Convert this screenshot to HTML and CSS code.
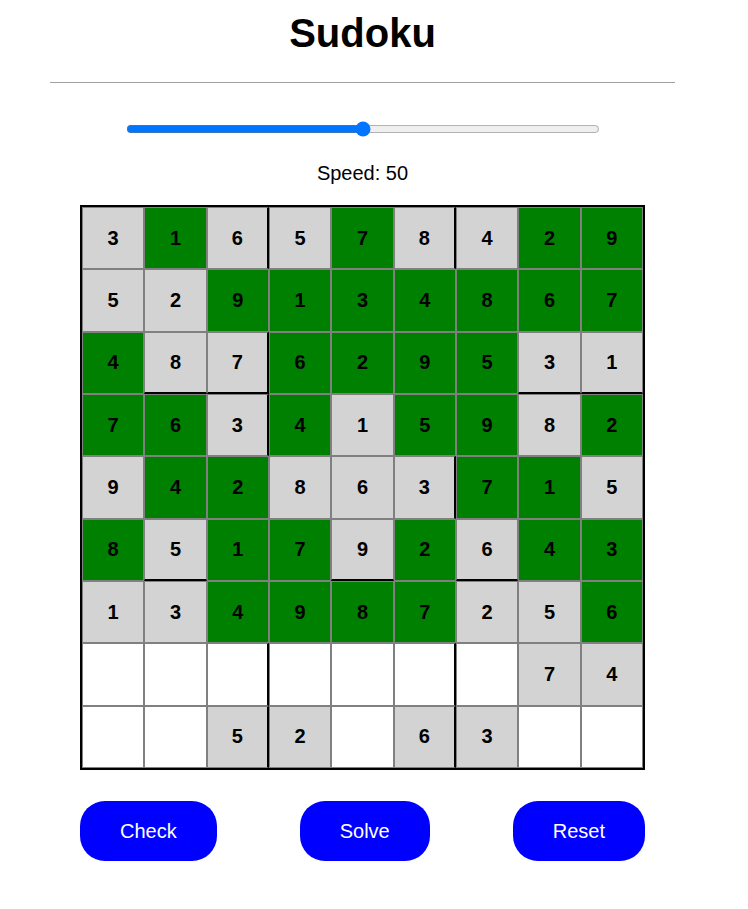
FILE: index.html
```html
<!DOCTYPE html>
<html lang="en">
<head>
<meta charset="utf-8">
<title>Sudoku</title>
<link rel="stylesheet" href="styles.css">
</head>
<body>
<div class="app">
  <h1 class="title">Sudoku</h1>
  <hr class="divider">
  <div class="speed-control">
    <input class="speed-slider" type="range" min="0" max="100" value="50">
  </div>
  <p class="speed-label">Speed: 50</p>
  <div class="board">
    <div class="cell given">3</div><div class="cell solved">1</div><div class="cell given br">6</div><div class="cell given">5</div><div class="cell solved">7</div><div class="cell given br">8</div><div class="cell given">4</div><div class="cell solved">2</div><div class="cell solved">9</div>
    <div class="cell given">5</div><div class="cell given">2</div><div class="cell solved">9</div><div class="cell solved">1</div><div class="cell solved">3</div><div class="cell solved">4</div><div class="cell solved">8</div><div class="cell solved">6</div><div class="cell solved">7</div>
    <div class="cell solved">4</div><div class="cell given bb">8</div><div class="cell given br bb">7</div><div class="cell solved">6</div><div class="cell solved">2</div><div class="cell solved">9</div><div class="cell solved">5</div><div class="cell given bb">3</div><div class="cell given bb">1</div>
    <div class="cell solved">7</div><div class="cell solved">6</div><div class="cell given br">3</div><div class="cell solved">4</div><div class="cell given">1</div><div class="cell solved">5</div><div class="cell solved">9</div><div class="cell given">8</div><div class="cell solved">2</div>
    <div class="cell given">9</div><div class="cell solved">4</div><div class="cell solved">2</div><div class="cell given">8</div><div class="cell given">6</div><div class="cell given br">3</div><div class="cell solved">7</div><div class="cell solved">1</div><div class="cell given">5</div>
    <div class="cell solved">8</div><div class="cell given bb">5</div><div class="cell solved">1</div><div class="cell solved">7</div><div class="cell given bb">9</div><div class="cell solved">2</div><div class="cell given bb">6</div><div class="cell solved">4</div><div class="cell solved">3</div>
    <div class="cell given">1</div><div class="cell given">3</div><div class="cell solved">4</div><div class="cell solved">9</div><div class="cell solved">8</div><div class="cell solved">7</div><div class="cell given">2</div><div class="cell given">5</div><div class="cell solved">6</div>
    <div class="cell empty"></div><div class="cell empty"></div><div class="cell empty br"></div><div class="cell empty"></div><div class="cell empty"></div><div class="cell empty br"></div><div class="cell empty"></div><div class="cell given">7</div><div class="cell given">4</div>
    <div class="cell empty"></div><div class="cell empty"></div><div class="cell given br">5</div><div class="cell given">2</div><div class="cell empty"></div><div class="cell given br">6</div><div class="cell given">3</div><div class="cell empty"></div><div class="cell empty"></div>
  </div>
  <div class="actions">
    <button class="btn" type="button">Check</button>
    <button class="btn" type="button">Solve</button>
    <button class="btn" type="button">Reset</button>
  </div>
</div>
</body>
</html>
```

FILE: styles.css
```css
html, body {
  margin: 0;
  padding: 0;
  background: #ffffff;
}

body {
  font-family: "Liberation Sans", Arial, sans-serif;
  color: #000;
}

.app {
  width: 725px;
  display: flex;
  flex-direction: column;
  align-items: center;
}

.title {
  margin: 10px 0 0;
  font-size: 40px;
  line-height: 46px;
  font-weight: bold;
}

.divider {
  align-self: stretch;
  margin: 26px 50px 0;
  border: 0;
  border-top: 1px solid #a0a0a0;
  height: 0;
}

.speed-control {
  margin-top: 38px;
  height: 16px;
  display: flex;
  align-items: center;
}

.speed-slider {
  width: 474px;
  margin: 0;
  accent-color: #0075ff;
}

.speed-label {
  margin: 25px 0 0;
  font-size: 20px;
  line-height: 23px;
}

.board {
  margin-top: 20px;
  width: 561px;
  height: 561px;
  border: 2px solid #000;
  display: grid;
  grid-template-columns: repeat(9, 1fr);
  grid-template-rows: repeat(9, 1fr);
}

.cell {
  box-sizing: border-box;
  border: 1px solid #808080;
  display: flex;
  align-items: center;
  justify-content: center;
  font-size: 20px;
  font-weight: bold;
}

.given { background: #d3d3d3; }
.solved { background: #008000; }
.empty { background: #ffffff; }

.br { border-right: 2px solid #000; }
.bb { border-bottom: 2px solid #000; }

.actions {
  margin-top: 31px;
  width: 565px;
  display: flex;
  justify-content: space-between;
}

.btn {
  height: 60px;
  padding: 0 40px;
  border: 0;
  border-radius: 25px;
  background: #0000ff;
  color: #ffffff;
  font-family: "Liberation Sans", Arial, sans-serif;
  font-size: 20px;
}
```
